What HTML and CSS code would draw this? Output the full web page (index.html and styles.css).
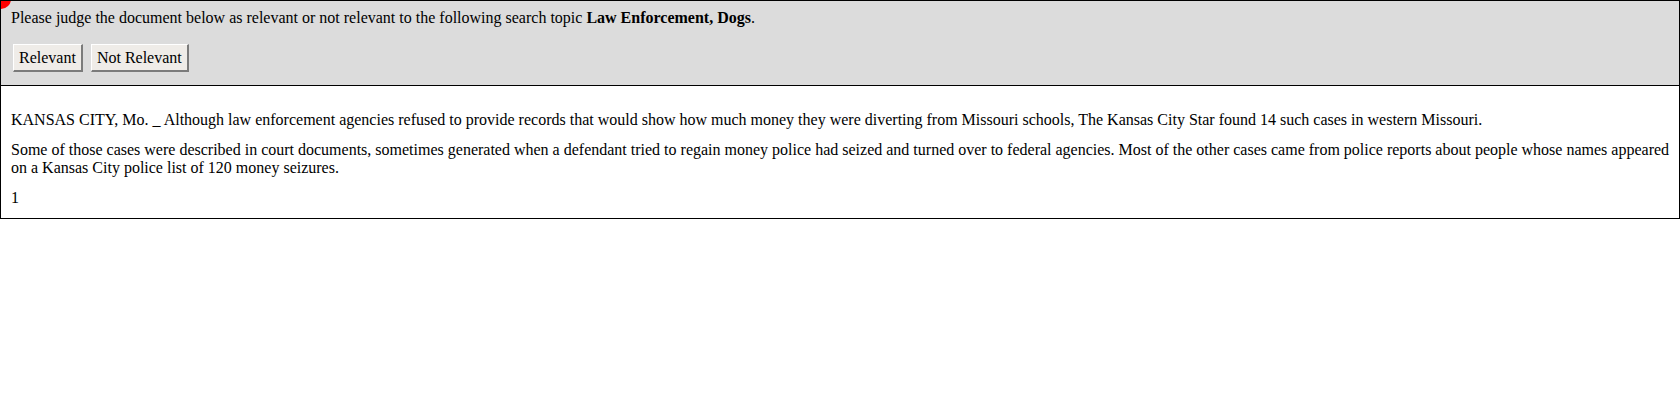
FILE: index.html
```html
<!DOCTYPE html>
<html>
<head>
<meta charset="utf-8">
<link rel="stylesheet" href="styles.css">
</head>
<body>
<div class="judge">
  <span class="dot"></span>
  <div class="prompt">Please judge the document below as relevant or not relevant to the following search topic <b>Law Enforcement, Dogs</b>.</div>
  <div class="actions">
    <button class="btn">Relevant</button>
    <button class="btn">Not Relevant</button>
  </div>
</div>
<div class="doc">
  <p>KANSAS CITY, Mo. _ Although law enforcement agencies refused to provide records that would show how much money they were diverting from Missouri schools, The Kansas City Star found 14 such cases in western Missouri.</p>
  <p>Some of those cases were described in court documents, sometimes generated when a defendant tried to regain money police had seized and turned over to federal agencies. Most of the other cases came from police reports about people whose names appeared on a Kansas City police list of 120 money seizures.</p>
  <p>1</p>
</div>
</body>
</html>
```

FILE: styles.css
```css
html, body {
  margin: 0;
  padding: 0;
  background: #ffffff;
}
body {
  font-family: "Liberation Serif", "Times New Roman", serif;
  font-size: 16px;
  line-height: 18px;
  color: #000;
}
.judge {
  position: relative;
  overflow: hidden;
  background: #dcdcdc;
  border: 1px solid #000;
  padding: 8px 10px 13px 10px;
}
.dot {
  position: absolute;
  left: -10px;
  top: -12px;
  width: 20px;
  height: 20px;
  border-radius: 50%;
  background: #ff0000;
}
.actions {
  display: flex;
  gap: 8px;
  margin-top: 17px;
  padding-left: 2px;
}
.btn {
  font-family: "Liberation Serif", "Times New Roman", serif;
  font-size: 16px;
  line-height: 18px;
  color: #000;
  background: #efece8;
  border-style: solid;
  border-width: 1px 2px 2px 1px;
  border-color: #ffffff #7b7b7b #7b7b7b #ffffff;
  padding: 4px 5px 4px 5px;
  margin: 0;
  height: 28px;
}
.doc {
  border: 1px solid #000;
  border-top: none;
  padding: 13px 2px 0 10px;
}
.doc p {
  margin: 12px 0 11px 0;
}
```
